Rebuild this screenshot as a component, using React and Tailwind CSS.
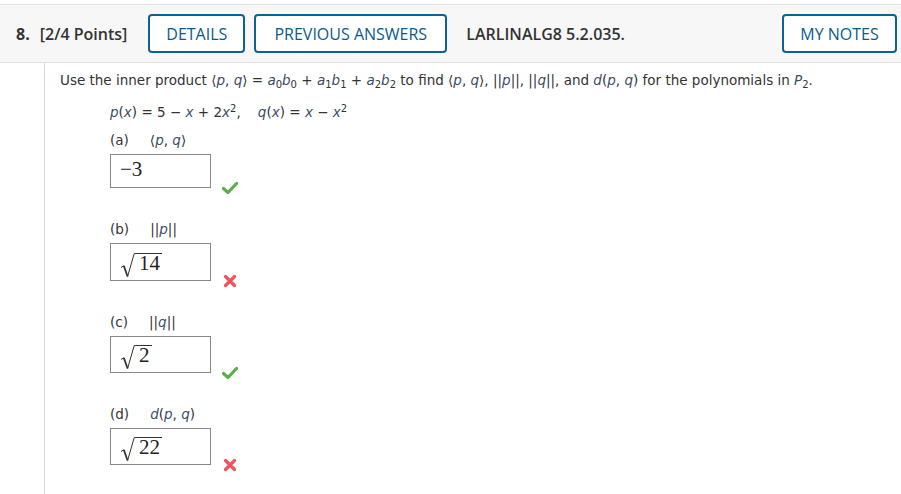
import React from "react";

const M = ({ children }) => (
  <span className="italic text-[#3b4c68]">{children}</span>
);

const Sub = ({ children }) => <sub className="text-[10px]">{children}</sub>;

const Sup = ({ children }) => <sup className="text-[10px]">{children}</sup>;

const Check = () => (
  <svg width="16" height="14" viewBox="0 0 16 14" className="ml-[11px] -mb-[7px]">
    <path d="M1.5 7.5 L6 11.5 L14.5 2.5" fill="none" stroke="#5cae4b" strokeWidth="3.2" strokeLinecap="round" strokeLinejoin="round" />
  </svg>
);

const Cross = () => (
  <svg width="14" height="14" viewBox="0 0 14 14" className="ml-[12px] -mb-[7px]">
    <path d="M2.5 2.5 L11.5 11.5 M11.5 2.5 L2.5 11.5" fill="none" stroke="#f0535d" strokeWidth="3.2" strokeLinecap="round" />
  </svg>
);

// radical drawn as svg, number sits under the overline
const Sqrt = ({ children }) => (
  <span className="inline-flex items-start">
    <svg width="16" height="25" viewBox="0 0 16 25">
      <path d="M1 14.5 L3.8 12.8" fill="none" stroke="#333" strokeWidth="1" />
      <path d="M3.8 12.8 L7.6 23.5" fill="none" stroke="#333" strokeWidth="1.8" />
      <path d="M7.6 23.5 L14.2 0.6 L16 0.6" fill="none" stroke="#333" strokeWidth="1" />
    </svg>
    <span className="border-t border-[#333] leading-[18px] pl-[3px] pr-[2px]">{children}</span>
  </span>
);

const Part = ({ label, what, children, ok, mt, box }) => (
  <div className={mt}>
    <div className="text-[13.5px] leading-[18px] text-[#333]">
      <span className="mr-[21px]">({label})</span>
      {what}
    </div>
    <div className="flex items-end mt-[5px]">
      <div className={`w-[101px] ${box} border border-[#888] bg-white flex items-start pl-[9px] text-[21px] leading-[24px] text-[#222]`} style={{ fontFamily: '"Liberation Serif", serif' }}>
        {children}
      </div>
      {ok ? <Check /> : <Cross />}
    </div>
  </div>
);

export default function App() {
  return (
    <div className="w-[901px] h-[494px] bg-white overflow-hidden" style={{ fontFamily: '"DejaVu Sans", Verdana, sans-serif' }}>
      <div className="mt-[4px] h-[59px] bg-[#f7f7f7] border-y border-[#e0e0e0] flex items-center pl-[16px] pr-[4px]" style={{ fontFamily: '"Open Sans", sans-serif' }}>
        <span className="text-[16px] font-bold text-[#333]">8.</span>
        <span className="ml-[10px] text-[16px] font-semibold text-[#333]">[2/4 Points]</span>
        <button className="ml-[21px] w-[97px] h-[39px] border-2 border-[#0b6298] rounded-[4px] text-[16px] text-[#0b5a8c] bg-white">DETAILS</button>
        <button className="ml-[9px] w-[193px] h-[39px] border-2 border-[#0b6298] rounded-[4px] text-[16px] text-[#0b5a8c] bg-white">PREVIOUS ANSWERS</button>
        <span className="ml-[19px] text-[16px] font-semibold text-[#333]">LARLINALG8 5.2.035.</span>
        <button className="ml-auto w-[115px] h-[39px] border-2 border-[#0b6298] rounded-[4px] text-[16px] text-[#0b5a8c] bg-white">MY NOTES</button>
      </div>
      <div className="ml-[44px] border-l border-[#d6d6d6] h-[431px] pl-[15px] pt-[7px] text-[#333]">
        <div className="text-[13.5px] leading-[20px]">
          Use the inner product ⟨<M>p</M>, <M>q</M>⟩ = <M>a</M><Sub>0</Sub><M>b</M><Sub>0</Sub> + <M>a</M><Sub>1</Sub><M>b</M><Sub>1</Sub> + <M>a</M><Sub>2</Sub><M>b</M><Sub>2</Sub> to find ⟨<M>p</M>, <M>q</M>⟩, ||<M>p</M>||, ||<M>q</M>||, and <M>d</M>(<M>p</M>, <M>q</M>) for the polynomials in <M>P</M><Sub>2</Sub>.
        </div>
        <div className="pl-[50px]">
          <div className="text-[13.5px] leading-[20px] mt-[12px]">
            <M>p</M>(<M>x</M>) = 5 − <M>x</M> + 2<M>x</M><Sup>2</Sup>,&nbsp;&nbsp;&nbsp; <M>q</M>(<M>x</M>) = <M>x</M> − <M>x</M><Sup>2</Sup>
          </div>
          <Part label="a" what={<>⟨<M>p</M>, <M>q</M>⟩</>} ok mt="mt-[9px]" box="h-[34px] pt-[2px]">−3</Part>
          <Part label="b" what={<>||<M>p</M>||</>} mt="mt-[32px]" box="h-[38px] pt-[9px]"><Sqrt>14</Sqrt></Part>
          <Part label="c" what={<>||<M>q</M>||</>} ok mt="mt-[32px]" box="h-[37px] pt-[8px]"><Sqrt>2</Sqrt></Part>
          <Part label="d" what={<><M>d</M>(<M>p</M>, <M>q</M>)</>} mt="mt-[32px]" box="h-[37px] pt-[8px]"><Sqrt>22</Sqrt></Part>
        </div>
      </div>
    </div>
  );
}
